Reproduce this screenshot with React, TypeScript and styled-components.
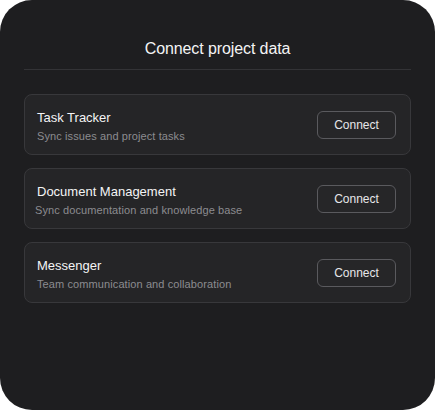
import * as React from 'react';
import styled, { createGlobalStyle } from 'styled-components';

const GlobalStyle = createGlobalStyle`
    html, body {
        margin: 0;
        padding: 0;
        background: #ffffff;
    }

    * {
        box-sizing: border-box;
    }
`;

const Panel = styled.section`
    width: 435px;
    height: 410px;
    background: #1e1e20;
    border-radius: 32px;
    padding: 39px 24px 0;
    font-family: 'Liberation Sans', Arial, sans-serif;
    color: #f2f2f3;
`;

const Header = styled.header`
    padding-bottom: 10px;
    border-bottom: 1px solid #333336;
    text-align: center;
`;

const Title = styled.h1`
    margin: 0;
    font-size: 16px;
    line-height: 20px;
    font-weight: 400;
    letter-spacing: -0.1px;
    color: #f4f4f5;
`;

const List = styled.ul`
    list-style: none;
    margin: 24px 0 0;
    padding: 0;
    display: flex;
    flex-direction: column;
    gap: 13px;
`;

const Card = styled.li`
    height: 61px;
    display: flex;
    align-items: center;
    justify-content: space-between;
    padding: 0 14px 0 12px;
    background: #252527;
    border: 1px solid #38383b;
    border-radius: 8px;
`;

const Info = styled.div`
    display: flex;
    flex-direction: column;
    gap: 3px;
    padding-top: 3px;
`;

const Name = styled.span`
    font-size: 13px;
    line-height: 16px;
    color: #f4f4f5;
`;

const Description = styled.span<{ $shift?: number }>`
    font-size: 11px;
    line-height: 14px;
    letter-spacing: 0.1px;
    color: #8c8c90;
    margin-left: ${(p) => p.$shift ?? 0}px;
`;

const ConnectButton = styled.button`
    width: 79px;
    height: 28px;
    padding: 0;
    background: #262628;
    border: 1px solid #5a5a5e;
    border-radius: 6px;
    font-family: inherit;
    font-size: 12px;
    color: #e6e6e8;
    cursor: pointer;

    &:hover {
        border-color: #8a8a8e;
    }
`;

const sources = [
    { name: 'Task Tracker', description: 'Sync issues and project tasks' },
    {
        name: 'Document Management',
        description: 'Sync documentation and knowledge base',
        shift: -2,
    },
    { name: 'Messenger', description: 'Team communication and collaboration' },
];

export default function App(): JSX.Element {
    return (
        <>
            <GlobalStyle />
            <Panel>
                <Header>
                    <Title>Connect project data</Title>
                </Header>
                <List>
                    {sources.map((source) => (
                        <Card key={source.name}>
                            <Info>
                                <Name>{source.name}</Name>
                                <Description $shift={source.shift}>
                                    {source.description}
                                </Description>
                            </Info>
                            <ConnectButton type="button">Connect</ConnectButton>
                        </Card>
                    ))}
                </List>
            </Panel>
        </>
    );
}
